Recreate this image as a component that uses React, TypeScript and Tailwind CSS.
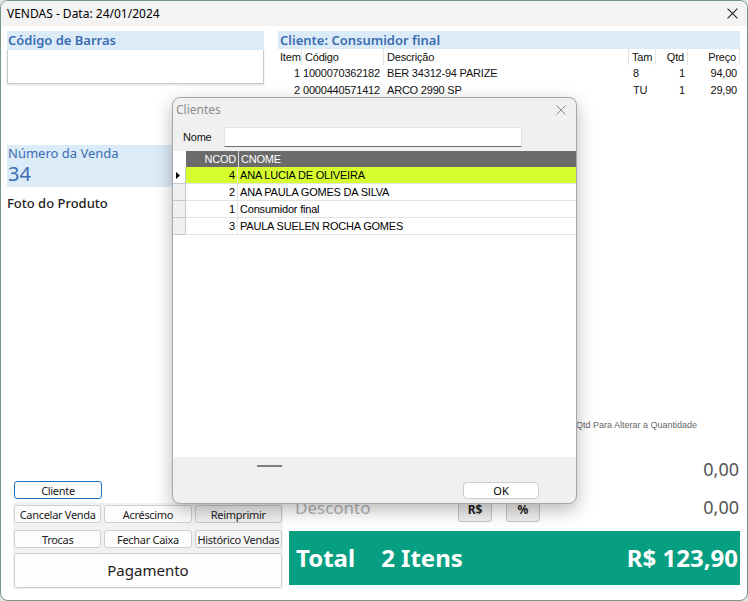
import React from "react";

const ui = { fontFamily: '"Noto Sans", "Open Sans", sans-serif' };
const grid = { fontFamily: '"Liberation Sans", Arial, sans-serif' };

const itens = [
  { item: 1, codigo: "1000070362182", desc: "BER 34312-94 PARIZE", tam: "8", qtd: 1, preco: "94,00" },
  { item: 2, codigo: "0000440571412", desc: "ARCO 2990 SP", tam: "TU", qtd: 1, preco: "29,90" },
];

const clientes = [
  { cod: 4, nome: "ANA LUCIA DE OLIVEIRA" },
  { cod: 2, nome: "ANA PAULA GOMES DA SILVA" },
  { cod: 1, nome: "Consumidor final" },
  { cod: 3, nome: "PAULA SUELEN ROCHA GOMES" },
];

function CloseIcon({ className }: { className?: string }) {
  return (
    <svg viewBox="0 0 10 10" className={className} fill="none" stroke="currentColor" strokeWidth="1">
      <path d="M0.5 0.5L9.5 9.5M9.5 0.5L0.5 9.5" />
    </svg>
  );
}

function Btn({ children, className = "" }: { children: React.ReactNode; className?: string }) {
  return (
    <button
      className={`flex items-center justify-center whitespace-nowrap rounded-[3px] border text-[11px] leading-none tracking-[-0.3px] text-[#1b1b1b] ${className}`}
      style={ui}
    >
      {children}
    </button>
  );
}

function ClientesDialog() {
  return (
    <div className="absolute left-[171px] top-[96px] flex h-[407px] w-[405px] flex-col overflow-hidden rounded-[8px] border border-[#a6a6a6] bg-[#f0f0f0] shadow-[0_6px_18px_rgba(0,0,0,0.28)]">
      <div className="flex h-[24px] shrink-0 items-center justify-between pl-[3px] pr-[10px]">
        <span className="text-[12px] text-[#8c8c8c]" style={ui}>
          Clientes
        </span>
        <CloseIcon className="h-[10px] w-[10px] text-[#8a8a8a]" />
      </div>
      <div className="mt-[5px] flex h-[20px] shrink-0 items-center pl-[10px]" style={grid}>
        <span className="w-[41px] text-[11px] tracking-[-0.2px] text-[#111]">Nome</span>
        <div className="h-[20px] w-[298px] border border-[#e3e3e3] border-b-[#6e6e6e] bg-white" />
      </div>
      <div className="mt-[4px] flex-1 bg-white text-[11px] tracking-[-0.2px]" style={grid}>
        <div className="grid h-[16px] grid-cols-[13px_52px_1fr]">
          <div className="bg-white" />
          <div className="bg-[#6b6b6b] pr-[2px] text-right leading-[16px] text-white">NCOD</div>
          <div className="border-l border-[#d9d9d9] bg-[#6b6b6b] pl-[2px] leading-[16px] text-white">CNOME</div>
        </div>
        {clientes.map((c, i) => (
          <div key={c.cod} className="grid h-[17px] grid-cols-[13px_52px_1fr]">
            <div
              className={`flex items-center justify-center border-b border-r border-[#c8c8c8] ${
                i === 0 ? "bg-white" : "bg-[#f0f0f0]"
              }`}
            >
              {i === 0 && (
                <svg viewBox="0 0 4 7" className="ml-[-3px] h-[7px] w-[4px]">
                  <polygon points="0,0 4,3.5 0,7" fill="#000" />
                </svg>
              )}
            </div>
            <div
              className={`border-b border-r border-[#e2e2e2] pr-[2px] text-right leading-[16px] text-black ${
                i === 0 ? "bg-[#d6fd2e]" : ""
              }`}
            >
              {c.cod}
            </div>
            <div className={`border-b border-[#e2e2e2] pl-[2px] leading-[16px] text-black ${i === 0 ? "bg-[#d6fd2e]" : ""}`}>
              {c.nome}
            </div>
          </div>
        ))}
      </div>
      <div className="relative h-[46px] shrink-0">
        <div className="absolute left-[84px] top-[8px] h-[2px] w-[25px] bg-[#7d7d7d]" />
        <button
          className="absolute left-[290px] top-[25px] h-[17px] w-[76px] rounded-[4px] border border-[#cdcdcd] bg-white text-[11px] leading-none text-black"
          style={ui}
        >
          OK
        </button>
      </div>
    </div>
  );
}

export default function App() {
  return (
    <div className="h-[601px] w-[748px] bg-[#dfe6e3]">
      <div className="relative flex h-full flex-col overflow-hidden rounded-[8px] border border-[#78948d] bg-white">
        <div className="flex h-[25px] shrink-0 items-center justify-between bg-[#f3f3f3] pl-[6px] pr-[9px]">
          <span className="text-[12px] text-black" style={ui}>
            VENDAS - Data: 24/01/2024
          </span>
          <CloseIcon className="h-[11px] w-[11px] text-[#222]" />
        </div>

        <div className="flex flex-1">
          {/* coluna esquerda */}
          <div className="flex w-[277px] shrink-0 flex-col pl-[6px]">
            <div className="mt-[5px] w-[257px]">
              <div className="h-[19px] bg-[#dcebf8] pl-[1px] text-[13px] font-semibold leading-[19px] text-[#3b6db3]" style={ui}>
                Código de Barras
              </div>
              <div className="h-[34px] border-x border-b border-[#c9c9c9] bg-white shadow-[0_1px_2px_rgba(0,0,0,0.15)]" />
            </div>
            <div className="mt-[61px] flex h-[42px] w-[257px] flex-col bg-[#dcebf8] pl-[1px] text-[#3b6db3]" style={ui}>
              <div className="text-[13px] leading-[16px]">Número da Venda</div>
              <div className="mt-[2px] text-[20px] leading-[22px]">34</div>
            </div>
            <div className="mt-[8px] text-[13px] font-medium leading-[16px] text-[#1d1d1d]" style={ui}>
              Foto do Produto
            </div>
            <div className="flex-1" />
            <Btn className="ml-[7px] h-[18px] w-[88px] border-[#1a6fc7] bg-[#fdfdfd]">Cliente</Btn>
            <div className="mb-[11px] ml-[6px] mt-[4px] w-[270px] bg-[#f1f1f1] px-[1px] pb-[1px] pt-[2px]">
              <div className="grid grid-cols-3 gap-[3px]">
                <Btn className="h-[18px] border-[#cfcfcf] bg-[#fdfdfd]">Cancelar Venda</Btn>
                <Btn className="h-[18px] border-[#cfcfcf] bg-[#fdfdfd]">Acréscimo</Btn>
                <Btn className="h-[18px] border-[#c9c9c9] bg-[#efefef]">Reimprimir</Btn>
              </div>
              <div className="mt-[7px] grid grid-cols-3 gap-[3px]">
                <Btn className="h-[18px] border-[#cfcfcf] bg-[#fdfdfd]">Trocas</Btn>
                <Btn className="h-[18px] border-[#cfcfcf] bg-[#fdfdfd]">Fechar Caixa</Btn>
                <Btn className="h-[18px] border-[#c9c9c9] bg-[#f6f6f6]">Histórico Vendas</Btn>
              </div>
              <Btn className="mt-[5px] h-[35px] w-[268px] border-[#cfcfcf] bg-[#fdfdfd] !text-[15px] !tracking-normal">
                Pagamento
              </Btn>
            </div>
          </div>

          {/* coluna direita */}
          <div className="flex flex-1 flex-col pr-[7px]">
            <div className="mt-[5px] h-[18px] bg-[#dcebf8] pl-[2px] text-[13px] font-semibold leading-[18px] text-[#3b6db3]" style={ui}>
              Cliente: Consumidor final
            </div>
            <div className="text-[11px] tracking-[-0.2px] text-[#111]" style={grid}>
              <div className="grid h-[16px] grid-cols-[24px_82px_245px_27px_32px_1fr] leading-[16px]">
                <div className="border-r border-[#e4e4e4] pl-[2px]">Item</div>
                <div className="border-r border-[#e4e4e4] pl-[3px]">Código</div>
                <div className="border-r border-[#e4e4e4] pl-[3px]">Descrição</div>
                <div className="border-r border-[#e4e4e4] pl-[3px]">Tam</div>
                <div className="border-r border-[#e4e4e4] pr-[3px] text-right">Qtd</div>
                <div className="border-r border-[#e4e4e4] pr-[3px] text-right">Preço</div>
              </div>
              {itens.map((it) => (
                <div key={it.item} className="grid h-[17px] grid-cols-[24px_82px_245px_27px_32px_1fr] leading-[17px]">
                  <div className="pr-[2px] text-right">{it.item}</div>
                  <div className="pl-[1px]">{it.codigo}</div>
                  <div className="pl-[3px]">{it.desc}</div>
                  <div className="pl-[4px]">{it.tam}</div>
                  <div className="pr-[3px] text-right">{it.qtd}</div>
                  <div className="pr-[3px] text-right">{it.preco}</div>
                </div>
              ))}
            </div>

            <div className="flex-1" />

            <div className="mb-[26px] pr-[43px] text-right text-[9px] leading-[12px] text-[#666]" style={grid}>
              Duplo Clique na Qtd Para Alterar a Quantidade
            </div>

            <div className="pl-[11px]" style={ui}>
              <div className="flex h-[25px] items-center pl-[6px] pr-[1px]">
                <span className="text-[17px] text-[#b3b3b3]">Acréscimo</span>
                <span className="ml-auto text-[18px] text-[#555]">0,00</span>
              </div>
              <div className="mt-[15px] flex h-[25px] items-center pl-[6px] pr-[1px]">
                <span className="mb-[5px] w-[163px] text-[17px] leading-none text-[#b3b3b3]">Desconto</span>
                <button className="h-[25px] w-[34px] rounded-[3px] border border-[#c4c4c4] bg-[#efefef] text-[12px] font-bold text-[#222]">
                  R$
                </button>
                <button className="ml-[14px] h-[25px] w-[34px] rounded-[3px] border border-[#c4c4c4] bg-[#efefef] text-[12px] font-bold text-[#222]">
                  %
                </button>
                <span className="mb-[5px] ml-auto text-[18px] leading-none text-[#555]">0,00</span>
              </div>
              <div className="mb-[15px] mt-[9px] flex h-[54px] items-center bg-[#079f82] pl-[7px] pr-[2px] font-bold text-white">
                <span className="text-[24px]">Total</span>
                <span className="ml-[26px] text-[24px]">2 Itens</span>
                <span className="ml-auto text-[24px]">R$ 123,90</span>
              </div>
            </div>
          </div>
        </div>

        <ClientesDialog />
      </div>
    </div>
  );
}
